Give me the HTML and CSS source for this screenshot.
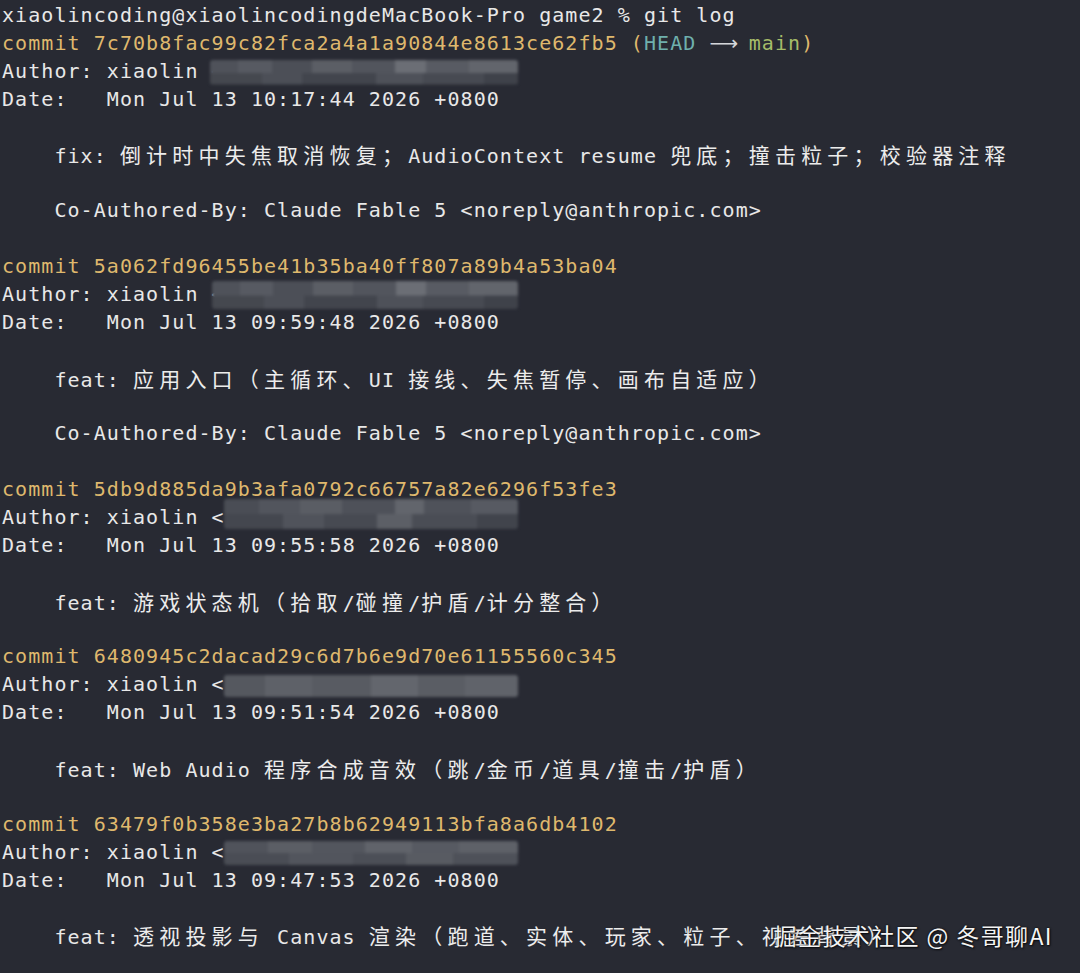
FILE: index.html
```html
<!DOCTYPE html>
<html lang="zh-CN">
<head>
<meta charset="utf-8">
<title>git log</title>
<link rel="stylesheet" href="styles.css">
</head>
<body>
<main class="term">
  <div class="l">xiaolincoding@xiaolincodingdeMacBook-Pro game2 % git log</div>
  <div class="l"><span class="y">commit 7c70b8fac99c82fca2a4a1a90844e8613ce62fb5 (</span><span class="c">HEAD</span> <span class="arrow">⟶</span> <span class="g">main</span><span class="y">)</span></div>
  <div class="l au">Author: xiaolin &lt;<span class="redact r1"></span></div>
  <div class="l">Date:   Mon Jul 13 10:17:44 2026 +0800</div>
  <div class="l"></div>
  <div class="l">    fix: <span class="cj">倒计时中失焦取消恢复；</span>AudioContext resume <span class="cj">兜底；撞击粒子；校验器注释</span></div>
  <div class="l"></div>
  <div class="l">    Co-Authored-By: Claude Fable 5 &lt;noreply@anthropic.com&gt;</div>
  <div class="l"></div>
  <div class="l"><span class="y">commit 5a062fd96455be41b35ba40ff807a89b4a53ba04</span></div>
  <div class="l au">Author: xiaolin &lt;<span class="redact r2"></span></div>
  <div class="l">Date:   Mon Jul 13 09:59:48 2026 +0800</div>
  <div class="l"></div>
  <div class="l">    feat: <span class="cj">应用入口（主循环、</span>UI <span class="cj">接线、失焦暂停、画布自适应）</span></div>
  <div class="l"></div>
  <div class="l">    Co-Authored-By: Claude Fable 5 &lt;noreply@anthropic.com&gt;</div>
  <div class="l"></div>
  <div class="l"><span class="y">commit 5db9d885da9b3afa0792c66757a82e6296f53fe3</span></div>
  <div class="l au">Author: xiaolin &lt;<span class="redact r3"></span></div>
  <div class="l">Date:   Mon Jul 13 09:55:58 2026 +0800</div>
  <div class="l"></div>
  <div class="l">    feat: <span class="cj">游戏状态机（拾取</span>/<span class="cj">碰撞</span>/<span class="cj">护盾</span>/<span class="cj">计分整合）</span></div>
  <div class="l"></div>
  <div class="l"><span class="y">commit 6480945c2dacad29c6d7b6e9d70e61155560c345</span></div>
  <div class="l au">Author: xiaolin &lt;<span class="redact r4"></span></div>
  <div class="l">Date:   Mon Jul 13 09:51:54 2026 +0800</div>
  <div class="l"></div>
  <div class="l">    feat: Web Audio <span class="cj">程序合成音效（跳</span>/<span class="cj">金币</span>/<span class="cj">道具</span>/<span class="cj">撞击</span>/<span class="cj">护盾）</span></div>
  <div class="l"></div>
  <div class="l"><span class="y">commit 63479f0b358e3ba27b8b62949113bfa8a6db4102</span></div>
  <div class="l au">Author: xiaolin &lt;<span class="redact r5"></span></div>
  <div class="l">Date:   Mon Jul 13 09:47:53 2026 +0800</div>
  <div class="l"></div>
  <div class="l">    feat: <span class="cj">透视投影与</span> Canvas <span class="cj">渲染（跑道、实体、玩家、粒子、视差背景）</span></div>
  <div class="watermark">掘金技术社区 @ 冬哥聊AI</div>
</main>
</body>
</html>
```
FILE: styles.css
```css
html, body {
  margin: 0;
  padding: 0;
  background: #282a33;
}

.term {
  position: relative;
  box-sizing: border-box;
  width: 1080px;
  height: 973px;
  overflow: hidden;
  padding: 2px 0 0 2px;
  background: #282a33;
  color: #e8e8e8;
  font-family: "DejaVu Sans Mono", monospace;
  font-size: 20px;
  letter-spacing: 1.06px;
}

.l {
  height: 27.9px;
  line-height: 27.9px;
  white-space: pre;
}

.au {
  position: relative;
}

.cj {
  font-family: "Noto Sans CJK SC", sans-serif;
  font-size: 21px;
  letter-spacing: 5.2px;
  line-height: 27.9px;
  color: #ececec;
}

.y { color: #dfb86d; }
.c { color: #6fb0ad; }
.g { color: #a6bc69; }

.arrow {
  display: inline-block;
  width: 26.2px;
  text-align: center;
  letter-spacing: 0;
  font-family: "DejaVu Sans", sans-serif;
  color: #d4d6da;
}

.redact {
  position: absolute;
  top: 2px;
  left: 218px;
  width: 298px;
  height: 25px;
  border-radius: 3px;
  filter: blur(1.8px);
  background:
    linear-gradient(90deg, #4f525a 0 9%, #575a62 9% 20%, #4c4f57 20% 33%, #5b5e65 33% 46%, #52555d 46% 60%, #6b6e75 60% 70%, #585b63 70% 84%, #62656c 84% 100%) top / 100% 52% no-repeat,
    linear-gradient(90deg, #45484f 0 17%, #4c4f57 17% 30%, #42454d 30% 54%, #4e5159 54% 69%, #474a52 69% 89%, #3f424a 89% 100%) bottom / 100% 50% no-repeat;
}

.r1 { left: 208px; width: 308px; }
.r2 { left: 210px; width: 306px; top: 0; height: 28px; }
.r3 {
  left: 222px;
  width: 294px;
  top: -5px;
  height: 30px;
  background:
    linear-gradient(90deg, #4a4d55 0 12%, #52555d 12% 26%, #5a5d64 26% 40%, #4e5159 40% 58%, #62656c 58% 68%, #4f525a 68% 84%, #575a62 84% 100%) top / 100% 50% no-repeat,
    linear-gradient(90deg, #44474f 0 20%, #50535b 20% 34%, #474a52 34% 52%, #5c5f66 52% 64%, #4a4d55 64% 86%, #41444c 86% 100%) bottom / 100% 50% no-repeat;
}
.r4 {
  left: 222px;
  width: 294px;
  top: 4px;
  height: 22px;
  background:
    linear-gradient(90deg, #55585f 0 14%, #5e6168 14% 30%, #585b62 30% 50%, #63666d 50% 66%, #5a5d64 66% 82%, #60636a 82% 100%);
}
.r5 {
  left: 222px;
  width: 294px;
  top: 2px;
  height: 24px;
  background:
    linear-gradient(90deg, #50535b 0 15%, #5b5e65 15% 30%, #53565e 30% 48%, #60636a 48% 64%, #575a62 64% 80%, #5e6168 80% 100%) top / 100% 50% no-repeat,
    linear-gradient(90deg, #4a4d55 0 22%, #52555d 22% 44%, #4c4f57 44% 62%, #585b62 62% 78%, #4e5159 78% 100%) bottom / 100% 50% no-repeat;
}

.watermark {
  position: absolute;
  right: 27px;
  top: 920px;
  font-family: "Noto Sans CJK SC", sans-serif;
  font-size: 23px;
  line-height: 30px;
  letter-spacing: 1.4px;
  color: #f4f4f4;
  text-shadow: 0 0 2px rgba(0, 0, 0, 0.9), 1px 1px 2px rgba(0, 0, 0, 0.7);
}
```
